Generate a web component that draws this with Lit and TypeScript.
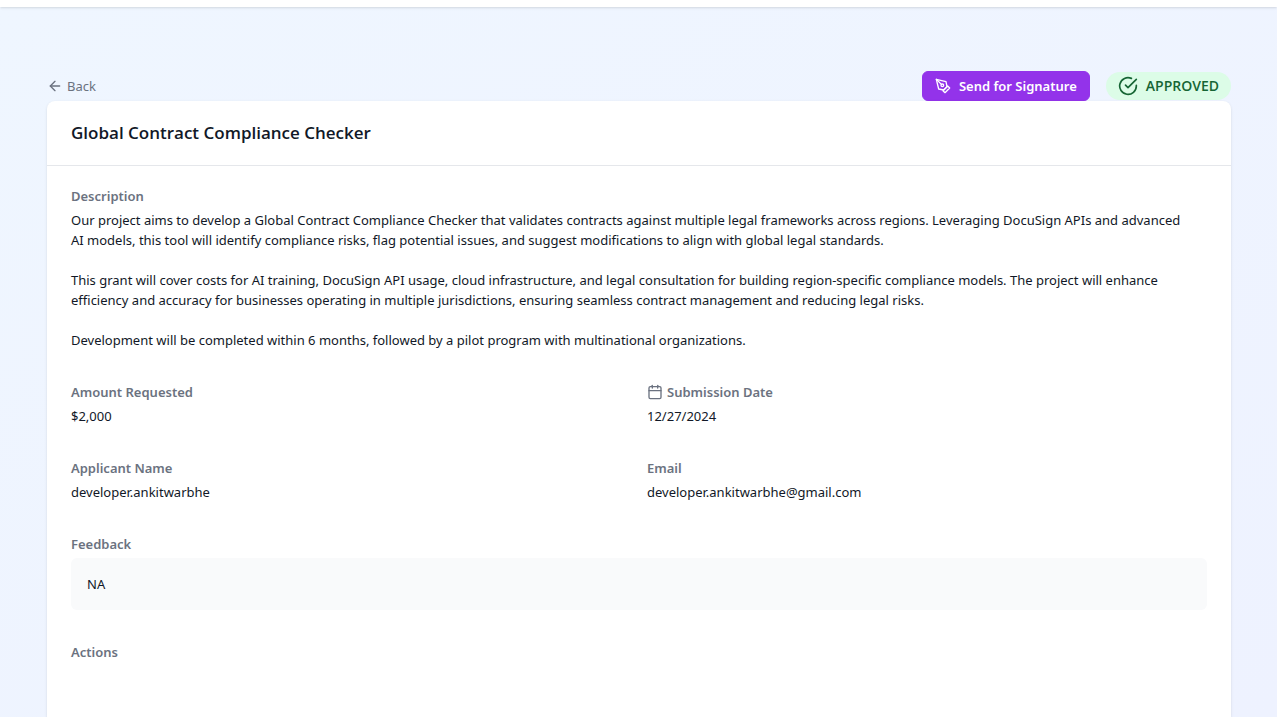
import { LitElement, html, svg, css } from "lit";
import { customElement, property } from "lit/decorators.js";

const icons = {
  back: svg`<path d="m12 19-7-7 7-7"/><path d="M19 12H5"/>`,
  pen: svg`<path d="m12 19 7-7 3 3-7 7-3-3z"/><path d="m18 13-1.5-7.5L2 2l3.500 14.500L13 18l5-5z"/><path d="m2 2 7.586 7.586"/><circle cx="11" cy="11" r="2"/>`,
  check: svg`<path d="M22 11.080V12a10 10 0 1 1-5.930-9.140"/><path d="m9 11 3 3L22 4"/>`,
  calendar: svg`<path d="M8 2v4"/><path d="M16 2v4"/><rect width="18" height="18" x="3" y="4" rx="2"/><path d="M3 10h18"/>`,
};

@customElement("line-icon")
class LineIcon extends LitElement {
  @property() name: keyof typeof icons = "back";

  static styles = css`
    :host { display: block; flex: none; width: 16px; height: 16px; }
    .glyph {
      display: block; width: 100%; height: 100%;
      fill: none; stroke: currentColor; stroke-width: 2;
      stroke-linecap: round; stroke-linejoin: round;
    }
  `;

  render() {
    return html`<svg class="glyph" viewBox="0 0 24 24" aria-hidden="true">${icons[this.name]}</svg>`;
  }
}

@customElement("app-root")
class AppRoot extends LitElement {
  static styles = css`
    :host {
      display: flex; flex-direction: column; min-height: 100vh;
      background: linear-gradient(to bottom right, #eff6ff, #eef2ff);
      font: 13px/20px "Noto Sans", "Open Sans", sans-serif;
      color: #111827;
    }
    * { box-sizing: border-box; }
    .topbar { height: 7px; background: #fff; box-shadow: 0 1px 3px rgb(0 0 0 / 0.1), 0 1px 2px -1px rgb(0 0 0 / 0.1); }
    .page { flex: 1; display: flex; flex-direction: column; padding: 64px 46px 0 47px; }
    .toolbar { display: flex; align-items: center; justify-content: space-between; }
    .back { display: flex; align-items: center; gap: 4px; color: #6b7280; text-decoration: none; }
    .status { display: flex; align-items: center; gap: 16px; }
    .send {
      display: flex; align-items: center; gap: 8px; height: 30px; padding: 0 12px;
      border: 1px solid #9333ea; border-radius: 6px; background: #9333ea; color: #fff;
      font: inherit; font-weight: 600; cursor: pointer;
    }
    .badge {
      display: flex; align-items: center; gap: 8px; padding: 4px 12px;
      border-radius: 999px; background: #dcfce7; color: #166534;
      font-family: "Open Sans", sans-serif; font-size: 14px; font-weight: 600;
    }
    .badge-icon { width: 20px; height: 20px; }
    .card { flex: 1; background: #fff; border-radius: 8px 8px 0 0; box-shadow: 0 1px 3px rgb(0 0 0 / 0.1), 0 1px 2px -1px rgb(0 0 0 / 0.1); }
    .card-head { padding: 20px 24px; border-bottom: 1px solid #e5e7eb; }
    .title { margin: 0; font-family: "Open Sans", sans-serif; font-size: 17px; line-height: 24px; font-weight: 600; }
    .details { display: grid; grid-template-columns: 1fr 1fr; gap: 32px 16px; margin: 0; padding: 20px 24px; }
    .wide { grid-column: 1 / -1; }
    .label { display: flex; align-items: center; gap: 4px; font-weight: 600; color: #6b7280; }
    .value { margin: 4px 0 0; }
    .prose { white-space: pre-line; }
    .note { padding: 16px; border-radius: 6px; background: #f9fafb; }
  `;

  private description = [
    "Our project aims to develop a Global Contract Compliance Checker that validates contracts against multiple legal frameworks across regions. Leveraging DocuSign APIs and advanced AI\u00a0models, this tool will identify compliance risks, flag potential issues, and suggest modifications to align with global legal standards.",
    "This grant will cover costs for AI training, DocuSign API usage, cloud infrastructure, and legal consultation for building region-specific compliance models. The project will enhance efficiency and accuracy for businesses operating in multiple jurisdictions, ensuring seamless contract management and reducing legal risks.",
    "Development will be completed within 6 months, followed by a pilot program with multinational organizations.",
  ].join("\n\n");

  private fields = [
    { label: "Amount Requested", value: "$2,000" },
    { label: "Submission Date", value: "12/27/2024", icon: "calendar" },
    { label: "Applicant Name", value: "developer.ankitwarbhe" },
    { label: "Email", value: "developer.ankitwarbhe@gmail.com" },
  ];

  render() {
    return html`
      <header class="topbar"></header>
      <main class="page">
        <div class="toolbar">
          <a class="back" href="#"><line-icon name="back"></line-icon>Back</a>
          <div class="status">
            <button class="send" type="button"><line-icon name="pen"></line-icon>Send for Signature</button>
            <span class="badge"><line-icon class="badge-icon" name="check"></line-icon>APPROVED</span>
          </div>
        </div>
        <article class="card">
          <div class="card-head"><h1 class="title">Global Contract Compliance Checker</h1></div>
          <dl class="details">
            <div class="wide">
              <dt class="label">Description</dt>
              <dd class="value prose">${this.description}</dd>
            </div>
            ${this.fields.map((f) => html`
              <div>
                <dt class="label">${f.icon ? html`<line-icon name=${f.icon}></line-icon>` : ""}${f.label}</dt>
                <dd class="value">${f.value}</dd>
              </div>`)}
            <div class="wide">
              <dt class="label">Feedback</dt>
              <dd class="value note">NA</dd>
            </div>
            <div class="wide"><dt class="label">Actions</dt></div>
          </dl>
        </article>
      </main>
    `;
  }
}
